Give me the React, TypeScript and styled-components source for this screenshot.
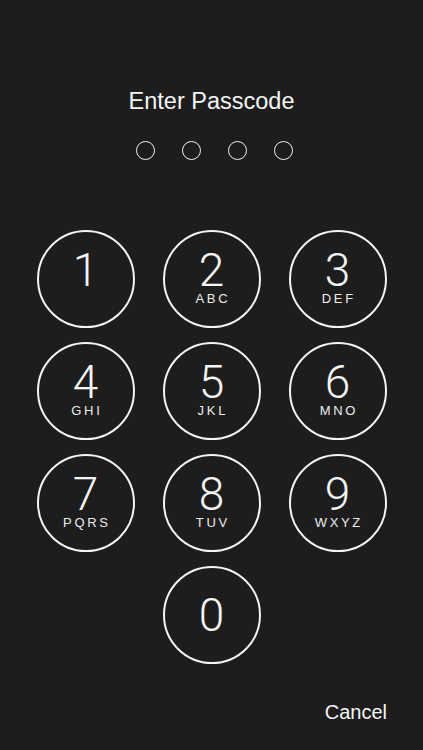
import styled, { createGlobalStyle } from "styled-components";

const GlobalStyle = createGlobalStyle`
  html, body {
    margin: 0;
    padding: 0;
    background: #1d1d1d;
  }
  body {
    font-family: "Liberation Sans", Arial, sans-serif;
    color: #ffffff;
  }
`;

interface IKey {
  digit: string;
  letters: string;
}

const keys: IKey[] = [
  { digit: "1", letters: "" },
  { digit: "2", letters: "ABC" },
  { digit: "3", letters: "DEF" },
  { digit: "4", letters: "GHI" },
  { digit: "5", letters: "JKL" },
  { digit: "6", letters: "MNO" },
  { digit: "7", letters: "PQRS" },
  { digit: "8", letters: "TUV" },
  { digit: "9", letters: "WXYZ" },
];

const Screen = styled.div`
  width: 423px;
  height: 750px;
  background: #1d1d1d;
  display: flex;
  flex-direction: column;
  align-items: center;
  box-sizing: border-box;
  padding-top: 88px;
  overflow: hidden;
`;

const Title = styled.h1`
  margin: 0;
  font-family: "Liberation Sans", Arial, sans-serif;
  font-weight: 400;
  font-size: 23.5px;
  line-height: 26px;
  color: #f4f4f4;
`;

const Dots = styled.div`
  display: flex;
  gap: 27px;
  margin-top: 27px;
  margin-left: 6px;
`;

const Dot = styled.span<{ $filled?: boolean }>`
  width: 19px;
  height: 19px;
  border-radius: 50%;
  border: 1.7px solid #f2f2f2;
  box-sizing: border-box;
  background: ${(p) => (p.$filled ? "#f2f2f2" : "transparent")};
`;

const Pad = styled.div`
  display: grid;
  grid-template-columns: repeat(3, 98px);
  column-gap: 28px;
  row-gap: 14px;
  margin-top: 70px;
`;

const Key = styled.button<{ $col?: number; $alone?: boolean }>`
  width: 98px;
  height: 98px;
  border-radius: 50%;
  border: 2px solid #f4f4f4;
  background: transparent;
  box-sizing: border-box;
  padding: ${(p) => (p.$alone ? "0" : "15px 0 0")};
  color: #f4f4f4;
  display: flex;
  flex-direction: column;
  align-items: center;
  justify-content: ${(p) => (p.$alone ? "center" : "flex-start")};
  grid-column: ${(p) => (p.$col ? p.$col : "auto")};
  cursor: pointer;
`;

const Digit = styled.span`
  font-family: Roboto, "Liberation Sans", sans-serif;
  font-weight: 300;
  font-size: 46px;
  line-height: 46px;
  height: 46px;
`;

const Letters = styled.span`
  font-family: "Liberation Sans", Arial, sans-serif;
  font-size: 13px;
  line-height: 12px;
  letter-spacing: 2.7px;
  margin-right: -2.7px;
  height: 12px;
  color: #ececec;
`;

const Footer = styled.div`
  width: 100%;
  display: flex;
  justify-content: flex-end;
  box-sizing: border-box;
  padding-right: 36px;
  margin-top: 36px;
`;

const Cancel = styled.button`
  background: none;
  border: none;
  padding: 0;
  font-family: "Liberation Sans", Arial, sans-serif;
  font-size: 20px;
  line-height: 24px;
  color: #f4f4f4;
  cursor: pointer;
`;

function App() {
  return (
    <>
      <GlobalStyle />
      <Screen>
        <Title>Enter Passcode</Title>
        <Dots>
          {[0, 1, 2, 3].map((i) => (
            <Dot key={i} />
          ))}
        </Dots>
        <Pad>
          {keys.map((k) => (
            <Key key={k.digit}>
              <Digit>{k.digit}</Digit>
              <Letters>{k.letters}</Letters>
            </Key>
          ))}
          <Key $col={2} $alone>
            <Digit>0</Digit>
          </Key>
        </Pad>
        <Footer>
          <Cancel>Cancel</Cancel>
        </Footer>
      </Screen>
    </>
  );
}

export default App;
